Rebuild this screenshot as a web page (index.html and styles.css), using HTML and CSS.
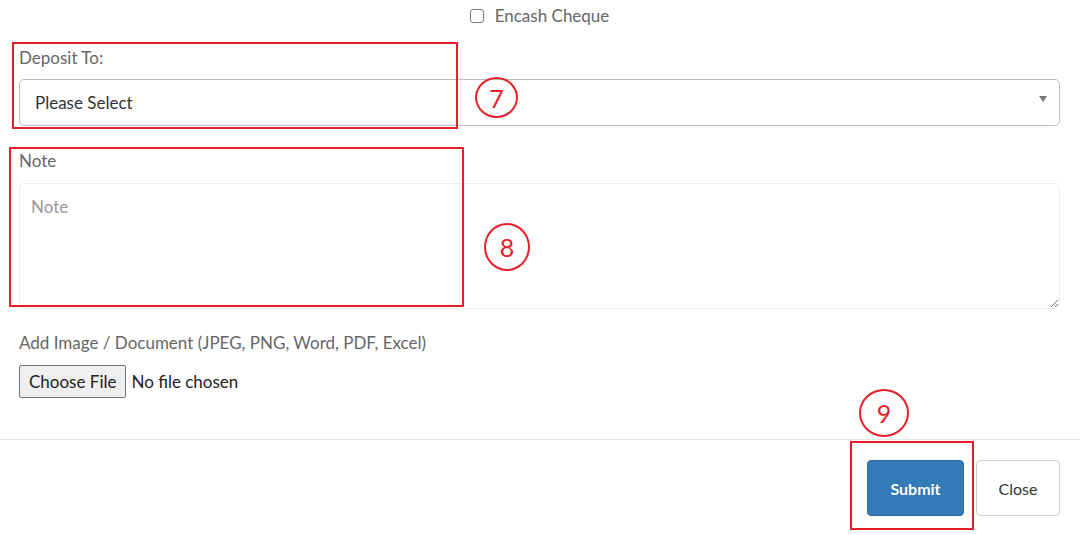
FILE: index.html
```html
<!DOCTYPE html>
<html>
<head>
<meta charset="utf-8">
<link rel="stylesheet" href="styles.css">
</head>
<body>
<div class="page">
  <div class="modal-body">
    <div class="check-row">
      <span class="checkbox"></span>
      <span class="check-label">Encash Cheque</span>
    </div>
    <div class="group group-deposit">
      <div class="label">Deposit To:</div>
      <div class="select">
        <span class="select-text">Please Select</span>
        <span class="caret"></span>
      </div>
    </div>
    <div class="group group-note">
      <div class="label">Note</div>
      <textarea class="textarea" placeholder="Note"></textarea>
    </div>
    <div class="group group-file">
      <div class="label">Add Image / Document (JPEG, PNG, Word, PDF, Excel)</div>
      <div class="file-row">
        <span class="file-btn">Choose File</span>
        <span class="file-text">No file chosen</span>
      </div>
    </div>
  </div>
  <div class="modal-footer">
    <button class="btn btn-primary">Submit</button>
    <button class="btn btn-default">Close</button>
  </div>

  <div class="anno-rect rect-7"></div>
  <div class="anno-rect rect-8"></div>
  <div class="anno-rect rect-9"></div>
  <div class="anno-circle circle-7">7</div>
  <div class="anno-circle circle-8">8</div>
  <div class="anno-circle circle-9">9</div>
</div>
</body>
</html>
```

FILE: styles.css
```css
html, body {
  margin: 0;
  padding: 0;
  background: #fff;
}
.page {
  position: relative;
  width: 1080px;
  height: 535px;
  overflow: hidden;
  font-family: "Lato", "Liberation Sans", sans-serif;
  font-size: 17px;
  color: #333;
}
.modal-body {
  padding: 0 20px 0 19px;
}
.check-row {
  height: 32px;
  display: flex;
  align-items: center;
  justify-content: center;
  gap: 11px;
  color: #666;
}
.checkbox {
  width: 12px;
  height: 12px;
  border: 1.5px solid #777;
  border-radius: 3px;
  box-sizing: content-box;
}
.check-label {
  line-height: 20px;
}
.label {
  line-height: 20px;
  height: 20px;
  color: #666;
}
.group-deposit {
  margin-top: 16px;
}
.group-deposit .label {
  margin-bottom: 11px;
}
.select {
  height: 47px;
  box-sizing: border-box;
  border: 1px solid #bcbcbc;
  border-radius: 5px;
  display: flex;
  align-items: center;
  justify-content: space-between;
  padding: 0 12px 0 15px;
  color: #333;
}
.select-text {
  line-height: 20px;
}
.caret {
  width: 0;
  height: 0;
  border-left: 4px solid transparent;
  border-right: 4px solid transparent;
  border-top: 6px solid #777;
  margin-bottom: 8px;
}
.group-note {
  margin-top: 25px;
}
.group-note .label {
  margin-bottom: 12px;
}
.textarea {
  display: block;
  width: 100%;
  height: 126px;
  box-sizing: border-box;
  border: 1px solid #ececec;
  border-radius: 5px;
  padding: 12px 11px;
  font-family: inherit;
  font-size: 17px;
  color: #333;
  resize: vertical;
  outline: none;
}
.textarea::placeholder {
  color: #999;
}
.group-file {
  margin-top: 24px;
}
.group-file .label {
  margin-bottom: 12px;
}
.file-row {
  display: flex;
  align-items: center;
  gap: 5px;
}
.file-btn {
  height: 33px;
  box-sizing: border-box;
  padding: 0 9px;
  display: flex;
  align-items: center;
  background: #efefef;
  border: 1px solid #767676;
  border-radius: 2px;
  color: #222;
}
.file-text {
  color: #222;
}
.modal-footer {
  margin-top: 41px;
  border-top: 1px solid #e5e5e5;
  padding: 20px 20px 0 0;
  display: flex;
  justify-content: flex-end;
  gap: 12px;
}
.btn {
  height: 56px;
  border-radius: 4px;
  font-family: inherit;
  font-size: 16px;
  padding: 0;
  cursor: pointer;
}
.btn-primary {
  width: 97px;
  background: #337ab7;
  border: 1px solid #2e6da4;
  color: #fff;
  font-weight: bold;
}
.btn-default {
  width: 84px;
  background: #fff;
  border: 1px solid #ccc;
  color: #333;
}
.anno-rect {
  position: absolute;
  border: 2px solid #e8202a;
  box-sizing: border-box;
}
.rect-7 { left: 12px; top: 42px; width: 446px; height: 87px; }
.rect-8 { left: 9px; top: 147px; width: 455px; height: 160px; }
.rect-9 { left: 850px; top: 441px; width: 124px; height: 89px; }
.anno-circle {
  position: absolute;
  box-sizing: border-box;
  border: 2px solid #e8202a;
  border-radius: 50%;
  color: #e8202a;
  display: flex;
  align-items: center;
  justify-content: center;
  font-family: "Lato", "Liberation Sans", sans-serif;
  font-size: 25px;
}
.circle-7 { left: 475px; top: 77px; width: 43px; height: 41px; }
.circle-8 { left: 484px; top: 223px; width: 46px; height: 48px; }
.circle-9 { left: 859px; top: 389px; width: 50px; height: 48px; }
```
